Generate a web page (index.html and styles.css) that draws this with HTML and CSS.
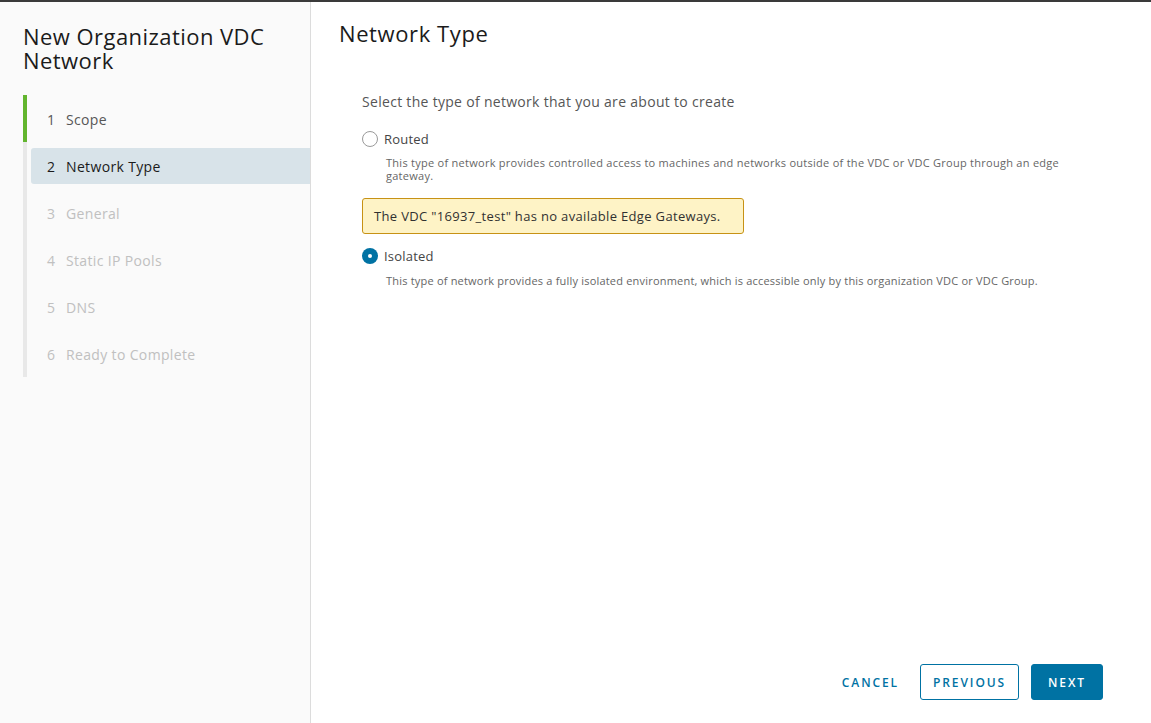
FILE: index.html
```html
<!DOCTYPE html>
<html>
<head>
<meta charset="utf-8">
<link rel="stylesheet" href="styles.css">
</head>
<body>
<div class="modal">
  <aside class="side">
    <h1 class="side-title">New Organization VDC Network</h1>
    <ol class="steps">
      <li class="step done"><span class="num">1</span><span>Scope</span></li>
      <li class="step current"><span class="num">2</span><span>Network Type</span></li>
      <li class="step"><span class="num">3</span><span>General</span></li>
      <li class="step"><span class="num">4</span><span>Static IP Pools</span></li>
      <li class="step"><span class="num">5</span><span>DNS</span></li>
      <li class="step"><span class="num">6</span><span>Ready to Complete</span></li>
    </ol>
  </aside>
  <main class="main">
    <h2 class="page-title">Network Type</h2>
    <div class="content">
      <p class="intro">Select the type of network that you are about to create</p>
      <div class="option">
        <label class="radio-row"><span class="radio"></span><span class="radio-label">Routed</span></label>
        <p class="desc">This type of network provides controlled access to machines and networks outside of the VDC or VDC Group through an edge gateway.</p>
      </div>
      <div class="alert">The VDC "16937_test" has no available Edge Gateways.</div>
      <div class="option">
        <label class="radio-row"><span class="radio checked"></span><span class="radio-label">Isolated</span></label>
        <p class="desc">This type of network provides a fully isolated environment, which is accessible only by this organization VDC or VDC Group.</p>
      </div>
    </div>
    <div class="footer">
      <button class="btn btn-link">CANCEL</button>
      <button class="btn btn-outline">PREVIOUS</button>
      <button class="btn btn-primary">NEXT</button>
    </div>
  </main>
</div>
</body>
</html>
```
FILE: styles.css
```css
* { box-sizing: border-box; }
html, body { margin: 0; padding: 0; height: 100%; }
body {
  font-family: "Open Sans", Lato, "Liberation Sans", sans-serif;
  color: #313131;
  background: #fff;
}
.modal {
  display: flex;
  height: 723px;
  border-top: 2px solid #3a3a3a;
}
.side {
  width: 311px;
  flex: none;
  background: #fafafa;
  border-right: 1px solid #dcdcdc;
  padding: 22px 0 0 23px;
}
.side-title {
  margin: 0;
  font-size: 22px;
  line-height: 24px;
  font-weight: 400;
  color: #1b1b1b;
  letter-spacing: 0.45px;
}
.steps {
  list-style: none;
  margin: 23px 0 0 0;
  padding: 0;
  border-left: 4px solid #e8e8e8;
  width: 287px;
}
.step {
  height: 47px;
  display: flex;
  align-items: center;
  font-size: 14px;
  color: #c0c0c0;
  padding-left: 20px;
  padding-top: 1px;
  letter-spacing: 0.35px;
}
.step .num { width: 19px; }
.step.done {
  color: #565656;
  border-left: 4px solid #62b52e;
  margin-left: -4px;
  padding-left: 20px;
}
.step.current {
  color: #1b1b1b;
  font-weight: 500;
  background: #d8e3e9;
  height: 36px;
  margin: 6px 0 5px 4px;
  padding-left: 16px;
  padding-top: 0;
  border-radius: 3px 0 0 3px;
}
.main {
  flex: 1;
  display: flex;
  flex-direction: column;
  padding: 18px 48px 23px 28px;
}
.page-title {
  margin: 0;
  font-size: 22px;
  line-height: 26px;
  font-weight: 400;
  color: #1b1b1b;
  letter-spacing: 0.6px;
}
.content {
  flex: 1;
  padding: 46px 0 0 23px;
}
.intro {
  margin: 0;
  font-size: 14px;
  line-height: 20px;
  color: #565656;
  letter-spacing: 0.3px;
}
.option { margin-top: 18px; }
.radio-row {
  display: flex;
  align-items: center;
  height: 18px;
}
.radio {
  width: 16px;
  height: 16px;
  border: 1px solid #9a9a9a;
  border-radius: 50%;
  background: #fff;
  margin-right: 6px;
  position: relative;
}
.radio.checked {
  border: none;
  background: #0072a3;
}
.radio.checked::after {
  content: "";
  position: absolute;
  left: 6px;
  top: 6px;
  width: 4px;
  height: 4px;
  border-radius: 50%;
  background: #fff;
}
.radio-label {
  font-size: 13px;
  color: #454545;
  letter-spacing: 0.2px;
}
.desc {
  margin: 8px 0 0 24px;
  font-size: 11px;
  line-height: 13px;
  color: #666;
  max-width: 680px;
  letter-spacing: 0.27px;
}
.alert {
  margin-top: 16px;
  width: 382px;
  height: 36px;
  background: #fef3c6;
  border: 1px solid #c79215;
  border-radius: 3px;
  font-size: 13px;
  color: #313131;
  display: flex;
  align-items: center;
  padding-left: 11px;
  letter-spacing: 0.33px;
}
.alert + .option { margin-top: 13px; }
.alert + .option .desc { margin-top: 9px; letter-spacing: 0.2px; }
.footer {
  display: flex;
  justify-content: flex-end;
  gap: 12px;
}
.btn {
  height: 36px;
  font-family: inherit;
  font-size: 12px;
  font-weight: 600;
  letter-spacing: 1.9px;
  border-radius: 3px;
  padding: 0 12px;
  background: transparent;
  color: #0072a3;
  border: 1px solid transparent;
  cursor: pointer;
}
.btn-link { padding: 0 8px; margin-right: 0; }
.btn-outline { border-color: #0072a3; background: #fff; }
.btn-primary { background: #0072a3; color: #fff; border-color: #0072a3; padding: 0 16px; }
```
